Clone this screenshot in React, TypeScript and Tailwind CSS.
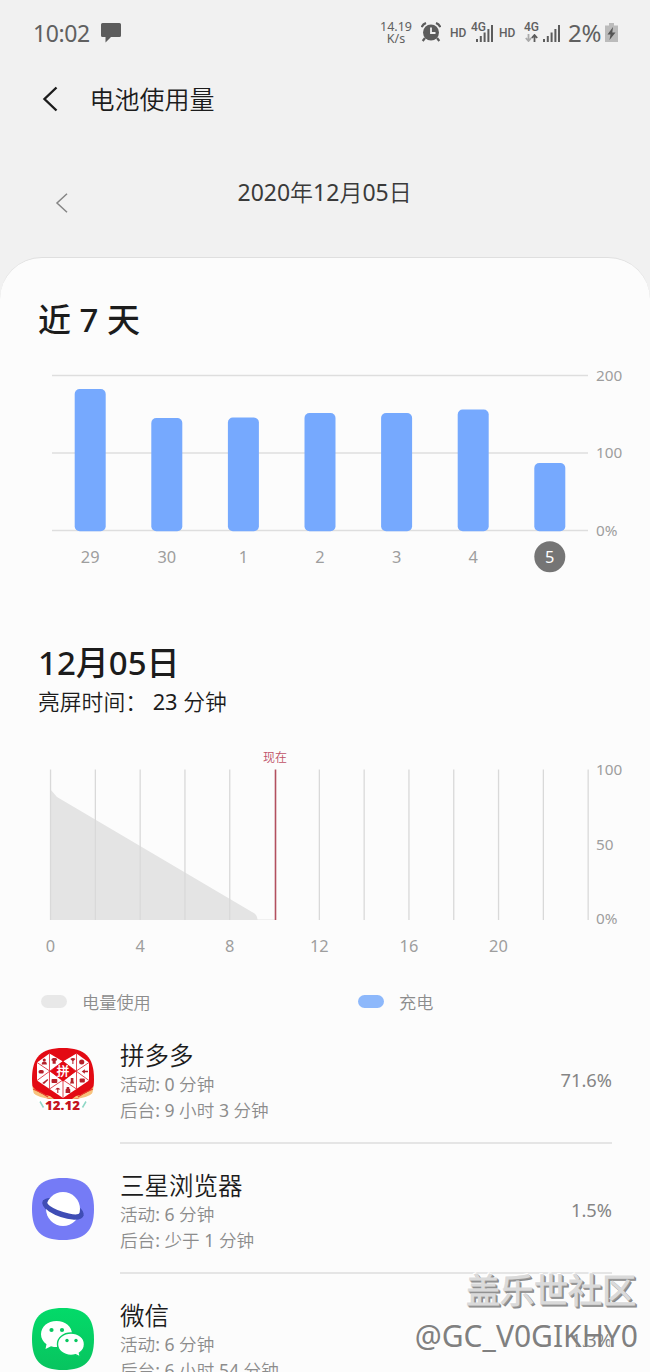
import React from 'react';

const days = [
  { label: '29', top: 389 },
  { label: '30', top: 418 },
  { label: '1', top: 417.5 },
  { label: '2', top: 413 },
  { label: '3', top: 413 },
  { label: '4', top: 409.5 },
  { label: '5', top: 463 },
];

const hours = [0, 2, 4, 6, 8, 10, 12, 14, 16, 18, 20, 22, 24];

function SignalBars() {
  return (
    <svg width="17" height="17" viewBox="0 0 17 17" fill="#5c5c5c">
      <rect x="0" y="14" width="2" height="3" />
      <rect x="3.8" y="11" width="2" height="6" />
      <rect x="7.6" y="7.5" width="2" height="9.5" />
      <rect x="11.4" y="4" width="2" height="13" />
      <rect x="15" y="0" width="2" height="17" />
    </svg>
  );
}

function StatusBar() {
  return (
    <div className="flex h-[66px] items-center pl-[33px] text-[#606060]">
      <span className="w-[68px] text-[23px] leading-[66px] tracking-[-0.4px]">10:02</span>
      <svg width="20" height="20" viewBox="0 0 20 20" className="mt-[-1px]">
        <path d="M1.5 0h17A1.5 1.5 0 0 1 20 1.5v11a1.500 1.500 0 0 1-1.500 1.500H10l-5.500 5.500V14h-3A1.500 1.500 0 0 1 0 12.500v-11A1.500 1.500 0 0 1 1.500 0z" fill="#5c5c5c" />
      </svg>
      <div className="ml-[259px] flex w-[32px] flex-col items-center text-[12.500px] leading-[12px]">
        <span>14.19</span>
        <span>K/s</span>
      </div>
      <svg width="20" height="20" viewBox="0 0 20 20" className="ml-[9px] mt-[-2px]">
        <circle cx="10" cy="10.500" r="8" fill="#5c5c5c" />
        <path d="M4 16l-2.300 3M16 16l2.300 3" stroke="#5c5c5c" strokeWidth="2.200" />
        <path d="M.7 5.200Q1.800 2.200 5 1M19.300 5.200Q18.200 2.200 15 1" stroke="#5c5c5c" strokeWidth="2.200" fill="none" />
        <path d="M10 5.500v5.500h4.500" stroke="#f1f1f1" strokeWidth="1.800" fill="none" />
      </svg>
      <span className="ml-[9px] w-[22px] font-[Roboto] text-[12px] font-medium leading-[60px]">HD</span>
      <div className="relative h-[20px] w-[23px]">
        <span className="absolute left-[-1px] top-[-2px] font-[Roboto] text-[12px] font-medium leading-[12px]">4G</span>
        <div className="absolute left-[4px] top-[2px]"><SignalBars /></div>
      </div>
      <span className="ml-[4px] w-[25px] font-[Roboto] text-[12px] font-medium leading-[60px]">HD</span>
      <div className="relative h-[20px] w-[38px]">
        <span className="absolute left-0 top-[-2px] font-[Roboto] text-[12px] font-medium leading-[12px]">4G</span>
        <svg width="14" height="8" viewBox="0 0 14 8" className="absolute left-[1px] top-[11px]" fill="none" strokeWidth="1.800">
          <path d="M3.500 0v6M.8 4l2.700 3 2.700-3" stroke="#aaa" />
          <path d="M9.500 8V2M6.800 4l2.700-3 2.700 3" stroke="#5c5c5c" />
        </svg>
        <div className="absolute left-[19px] top-[2px]"><SignalBars /></div>
      </div>
      <span className="ml-[6px] w-[37px] text-[24px] leading-[66px] tracking-[-0.200px]">2%</span>
      <svg width="13" height="19" viewBox="0 0 13 19" className="mt-[-2px]">
        <path d="M4 0h5v2.500h4V19H0V2.500h4z" fill="#bbb" />
        <path d="M8 4L2.500 11.500h3L4.500 17l6-7.500h-3.200z" fill="#555" />
      </svg>
    </div>
  );
}

function WeeklyChart() {
  return (
    <svg width="650" height="230" viewBox="0 360 650 230" className="block shrink-0" fontSize="15.300">
      {[375.5, 453, 530.500].map((y, i) => (
        <g key={y}>
          <rect x="52" y={y - 0.75} width="536" height="1.500" fill="#dedede" />
          <text x="596" y={y + 5} fill="#9e9e9e">{['200', '100', '0%'][i]}</text>
        </g>
      ))}
      {days.map((d, i) => {
        const x = 90.200 + i * 76.600;
        const active = i === days.length - 1;
        return (
          <g key={d.label}>
            <rect x={x - 15.500} y={d.top} width="31" height={531.300 - d.top} rx="5" fill="#76a9fe" />
            {active && <circle cx={x} cy="556.700" r="15.500" fill="#757575" />}
            <text x={x} y="562.800" textAnchor="middle" fontSize="16.400" fill={active ? '#ffffff' : '#9e9e9e'}>{d.label}</text>
          </g>
        );
      })}
    </svg>
  );
}

function HourlyChart() {
  return (
    <svg width="650" height="220" viewBox="0 745 650 220" className="block shrink-0" fontSize="15.300">
      <path d="M50.500 789.500L57 797L252 912Q257 914 257.500 919.500L275 919.500V920H50.500z" fill="#e4e4e4" />
      {hours.map((h) => (
        <g key={h}>
          {h !== 10 && <rect x={49.900 + h * 22.400} y="769.500" width="1.300" height="150.500" fill="#d9d9d9" />}
          {h % 4 === 0 && h < 24 && (
            <text x={50.500 + h * 22.400} y="951.800" fontSize="16.400" textAnchor="middle" fill="#9e9e9e">{h}</text>
          )}
        </g>
      ))}
      <rect x="274.700" y="769.500" width="1.600" height="150.500" fill="#b2505f" />
      <text x="275" y="762" fontSize="12" textAnchor="middle" fill="#c05268">现在</text>
      <text x="596" y="774.500" fill="#9e9e9e">100</text>
      <text x="596" y="849.500" fill="#9e9e9e">50</text>
      <text x="596" y="924" fill="#9e9e9e">0%</text>
    </svg>
  );
}

const squircle = 'M31 0C53 0 62 9 62 31S53 62 31 62 0 53 0 31 9 0 31 0z';

function PinduoduoIcon() {
  return (
    <svg width="62" height="64" viewBox="0 0 62 64">
      <clipPath id="pdd"><path d={squircle} /></clipPath>
      <g clipPath="url(#pdd)">
        <rect width="62" height="62" fill="#fff" />
        <path d="M0 0h62v38q-4 9-17 13H17Q4 47 0 38z" fill="#e30a14" />
        <path d="M0 38q6 8 18 10l4 3Q7 51 0 44zM62 38q-6 8-18 10l-4 3q15 0 22-7z" fill="#f7c37e" />
        <path d="M1 41q8 3 15 8M61 41q-8 3-15 8" stroke="#e6432c" strokeWidth="1.200" fill="none" />
      </g>
      <g transform="translate(31 0) scale(1.04 1) translate(-31 0)">
        <path d="M18 5.500L31 13.500 44 5.500 56 14.500v18L31 50 6 32.500v-18z" fill="#fff" />
        <path d="M18 5v36M44 5v36M6 14.500L44 41M56 14.500L18 41M6 32.500L31 13.500 56 32.500M31 33v17" stroke="#df3942" strokeWidth=".9" fill="none" />
        <path d="M31 13L43.500 23.300 31 33.500 18.500 23.300z" fill="#e30a14" />
        <g fill="#b5202a">
          <circle cx="13" cy="12" r="1.500" />
          <path d="M10.500 16.500q0-3 2.500-3t2.500 3z" />
          <path d="M20 11l1.500-1h2.500l1.500 1-.5 1.500-1 .3v3h-3v-3l-1-.3z" />
          <path d="M38 11q2.500-2 5 0l-2 2v3h-1v-3z" />
          <circle cx="49" cy="14" r="2.500" />
          <rect x="7.500" y="22" width="5" height="3.500" rx="1.500" />
          <path d="M49 23.500l3-2.300v1.500h3v1.600h-3v1.500z" />
          <path d="M11 35l5-4 .8 1-4 4z" />
          <rect x="20" y="31" width="5.500" height="4" rx=".8" />
          <path d="M38.500 30h2.500v3l.7 2.500h-4l.8-2.500z" />
          <rect x="47" y="30.500" width="5" height="4" rx="1" />
          <path d="M23.500 41.500q2.500-3.500 5 0h-2v3.500h-1v-3.500zM34.500 39h2.500v1.500l1 1v3.500h-4.500v-3.500l1-1z" />
        </g>
      </g>
      <text x="31" y="28" textAnchor="middle" fontSize="12.500" fontWeight="700" fill="#fff">拼</text>
      <path d="M8 53.500l3.500 6M54 53.500l-3.500 6" stroke="#8ed8c6" strokeWidth="1.500" />
      <text x="30.500" y="61.500" textAnchor="middle" fontSize="12.500" fontWeight="900" fill="#c5141f" textLength="35" lengthAdjust="spacingAndGlyphs">12.12</text>
    </svg>
  );
}

function BrowserIcon() {
  return (
    <svg width="62" height="62" viewBox="0 0 62 62">
      <path d={squircle} fill="#757bf6" />
      <ellipse cx="31" cy="30.500" rx="21.500" ry="9" transform="rotate(18 31 30.500)" fill="#3f4db5" />
      <circle cx="31" cy="31" r="17" fill="#fff" />
      <path d="M11 22Q9 27.500 17 33.500 28 40.500 42 41.800 51 42 51.700 37L48 35Q46 37.500 37 35.500 25 33 18 28 14 25 15 22z" fill="#3f4db5" />
    </svg>
  );
}

function WeChatIcon() {
  return (
    <svg width="62" height="62" viewBox="0 0 62 62">
      <defs>
        <linearGradient id="wx" x1="0" y1="0" x2="0" y2="1">
          <stop offset="0" stopColor="#03da69" />
          <stop offset="1" stopColor="#08c45f" />
        </linearGradient>
      </defs>
      <path d={squircle} fill="url(#wx)" />
      <path d="M24.500 13C15.500 13 9 18.800 9 26.200c0 4 2 7.500 5.500 10L13.500 41l5.500-2.800c2 .6 3.800.9 5.500.9C33.500 39 40 33.500 40 26.200S33.500 13 24.500 13z" fill="#fff" />
      <path d="M39 25c-7.700 0-13.500 5-13.500 11.200S31.300 47.400 39 47.400c1.500 0 3.200-.3 4.700-.7l4.800 2.500-1.100-4.200c3.200-2 5.100-5.200 5.100-8.800C52.500 30 46.700 25 39 25z" fill="#fff" stroke="#06ce63" strokeWidth="1.400" />
      <g fill="#07c75f">
        <circle cx="19.500" cy="22" r="2.100" />
        <circle cx="30" cy="22" r="2.100" />
        <circle cx="35" cy="32.500" r="1.700" />
        <circle cx="44" cy="32.500" r="1.700" />
      </g>
    </svg>
  );
}

const apps = [
  { name: '拼多多', active: '活动: 0 分钟', back: '后台: 9 小时 3 分钟', pct: '71.6%', icon: <PinduoduoIcon /> },
  { name: '三星浏览器', active: '活动: 6 分钟', back: '后台: 少于 1 分钟', pct: '1.5%', icon: <BrowserIcon /> },
  { name: '微信', active: '活动: 6 分钟', back: '后台: 6 小时 54 分钟', pct: '1.3%', icon: <WeChatIcon /> },
];

export default function App() {
  return (
    <div className="relative flex h-[1372px] w-[650px] flex-col overflow-hidden whitespace-nowrap bg-[#f1f1f1] font-['Noto_Sans','Noto_Sans_CJK_SC_DemiLight','Noto_Sans_CJK_SC_Light','Noto_Sans_CJK_SC',sans-serif] text-[#1c1c1c]">
      <StatusBar />
      <header className="flex h-[66px] items-center pl-[42px]">
        <svg width="17" height="26" viewBox="0 0 17 26" fill="none" stroke="#1c1c1c" strokeWidth="2.400" className="mt-[-1px]">
          <path d="M14.500 1.500L2.500 13l12 11.500" />
        </svg>
        <h1 className="ml-[30.500px] text-[25px] leading-[67px]">电池使用量</h1>
      </header>
      <div className="flex h-[125px] shrink-0 pl-[55px]">
        <svg width="14" height="20" viewBox="0 0 14 20" fill="none" stroke="#858585" strokeWidth="1.500" className="mt-[61px]">
          <path d="M12 .8L2 10l10 9.200" />
        </svg>
        <span className="ml-[168.500px] text-[23px] leading-[120px] text-[#3a3a3a]">2020年12月05日</span>
      </div>
      <main className="flex h-[1115px] shrink-0 flex-col rounded-t-[42px] border-t border-[#dfdfdf] bg-[#fcfcfc]">
        <h2 className="mt-[37px] h-[65px] shrink-0 pl-[38px] font-['Noto_Sans','Noto_Sans_CJK_SC',sans-serif] text-[33px] font-medium leading-[50px]">近 7 天</h2>
        <WeeklyChart />
        <h2 className="mt-[50px] h-[46px] shrink-0 pl-[38px] font-['Noto_Sans','Noto_Sans_CJK_SC',sans-serif] text-[33px] font-medium leading-[46px]">12月05日</h2>
        <p className="h-[59px] shrink-0 pl-[38px] text-[21.800px] leading-[31px]">亮屏时间： 23 分钟</p>
        <HourlyChart />
        <div className="flex h-[62px] shrink-0 items-start pl-[41px] pt-[25px] text-[17.200px] leading-[26px] text-[#8c8c8c]">
          <span className="mt-[5px] h-[13px] w-[26px] rounded-full bg-[#e8e8e8]" />
          <span className="ml-[15px] w-[276px]">电量使用</span>
          <span className="mt-[5px] h-[13px] w-[26px] rounded-full bg-[#8db8fb]" />
          <span className="ml-[15px]">充电</span>
        </div>
        {apps.map((app, i) => (
          <section key={app.name} className="flex h-[130px] shrink-0 pl-[32px]">
            <div className="mt-[21px] w-[88px]">{app.icon}</div>
            <div className={`mt-[14px] flex h-[103px] w-[492px] justify-between ${i < 2 ? 'border-b-2 border-[#e5e5e5]' : ''}`}>
              <div>
                <div className="h-[31px] text-[24.500px] leading-[30px]">{app.name}</div>
                <div className="text-[17.600px] leading-[25.500px] text-[#8c8c8c]">
                  <div>{app.active}</div>
                  <div>{app.back}</div>
                </div>
              </div>
              <span className="mt-[25px] text-[18.300px] leading-[28px] text-[#858585]">{app.pct}</span>
            </div>
          </section>
        ))}
      </main>
      <div className="absolute right-[12px] top-[1269px] flex flex-col items-end text-[#dadada]">
        <span className="mr-[2px] text-[34px] font-bold leading-[42px] [text-shadow:1px_1px_0_#999,2px_2px_0_#888,-1px_-1px_0_#fff]">盖乐世社区</span>
        <span className="text-[30px] leading-[50px] text-[#808080] [text-shadow:-1px_-1px_0_#fff]">@GC_V0GIKHY0</span>
      </div>
    </div>
  );
}
